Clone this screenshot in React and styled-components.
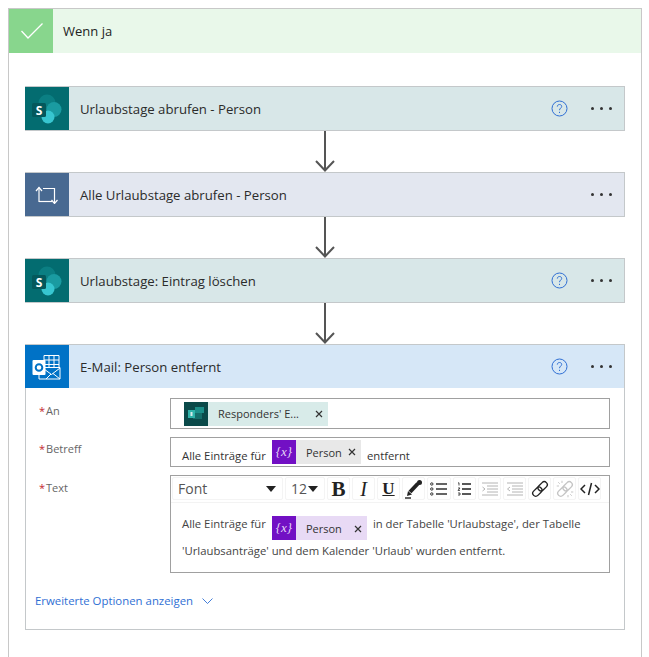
import React from 'react';
import styled, { createGlobalStyle } from 'styled-components';

const Global = createGlobalStyle`
  html, body {
    margin: 0;
    height: 657px;
    overflow: hidden;
    background: #fff;
    font-family: "Open Sans", "Noto Sans", "Liberation Sans", sans-serif;
    color: #2b2b2b;
  }
`;

const Page = styled.div`
  padding: 8px 0 0 8px;
`;

const Branch = styled.section`
  width: 632px;
  height: 660px;
  border: 1px solid #c8c8c8;
  border-bottom: 0;
  display: flex;
  flex-direction: column;
`;

const BranchHeader = styled.header`
  height: 44px;
  background: #e9f8ea;
  display: flex;
  align-items: center;
`;

const BranchIcon = styled.div`
  width: 44px;
  height: 44px;
  background: #88d68d;
  display: flex;
  align-items: center;
  justify-content: center;
`;

const BranchTitle = styled.span`
  margin-left: 10px;
  font-size: 13px;
  color: #222;
`;

const Flow = styled.div`
  padding: 33px 0 0 16px;
  display: flex;
  flex-direction: column;
  width: 600px;
`;

const Card = styled.div`
  width: 598px;
  border: 1px solid #c4c8ca;
  display: flex;
  flex-direction: column;
`;

const CardHeader = styled.div`
  height: 43px;
  background: ${p => p.$bg};
  display: flex;
  align-items: center;
`;

const CardIcon = styled.div`
  width: 44px;
  height: 43px;
  margin-left: -1px;
  background: ${p => p.$bg};
  display: flex;
  align-items: center;
  justify-content: center;
`;

const CardTitle = styled.span`
  flex: 1;
  margin-left: 11px;
  font-size: 13.2px;
  color: #2b2b2b;
`;

const HelpIcon = styled.svg`
  width: 17px;
  height: 17px;
  margin-right: 23px;
`;

const MoreDots = styled.div`
  width: 21px;
  margin-right: 12px;
  display: flex;
  justify-content: space-between;

  i {
    width: 3px;
    height: 3px;
    border-radius: 50%;
    background: #333;
  }
`;

const Connector = styled.svg`
  display: block;
  width: 600px;
  height: 41px;
`;

const Form = styled.div`
  padding: 10px 13px 0 13px;
  display: grid;
  grid-template-columns: 131px 440px;
  row-gap: 8px;
`;

const Label = styled.label`
  font-size: 11px;
  color: #666;
  padding-top: ${p => p.$top}px;

  em {
    color: #c4262e;
    font-style: normal;
    margin-right: 1px;
  }
`;

const Field = styled.div`
  box-sizing: border-box;
  height: ${p => p.$h}px;
  border: 1px solid #a0a0a0;
  display: flex;
  align-items: center;
  padding-left: ${p => p.$pad}px;
  font-size: 11.3px;
  color: #333;
`;

const RichField = styled.div`
  box-sizing: border-box;
  height: 98px;
  border: 1px solid #a0a0a0;
`;

const Toolbar = styled.div`
  height: 25px;
  padding: 1px 1px 0;
  display: flex;
  gap: 2px;
  border-bottom: 1px solid #f3f3f3;
`;

const ToolButton = styled.div`
  box-sizing: border-box;
  width: ${p => p.$w || 23}px;
  height: 23px;
  border: 1px solid #f4f4f4;
  border-radius: 2px;
  display: flex;
  align-items: center;
  justify-content: ${p => (p.$spread ? 'space-between' : 'center')};
  padding: ${p => (p.$spread ? '0 6px 0 5px' : '0')};
  font-size: 14px;
  color: #555;
`;

const Caret = styled.span`
  width: 0;
  height: 0;
  border-left: 5px solid transparent;
  border-right: 5px solid transparent;
  border-top: 6px solid #222;
`;

const Glyph = styled.span`
  font-family: "Liberation Serif", serif;
  font-weight: ${p => (p.$bold ? 700 : 400)};
  font-style: ${p => (p.$italic ? 'italic' : 'normal')};
  text-decoration: ${p => (p.$under ? 'underline' : 'none')};
  font-size: ${p => p.$size || 15}px;
  line-height: 20px;
  color: #222;
`;

const RichBody = styled.div`
  padding: 13px 12px 0 11px;
  font-size: 11.3px;
  color: #444;
`;

const RichLine = styled.div`
  height: ${p => p.$h}px;
  display: flex;
  align-items: flex-start;
  line-height: 16px;
  white-space: pre;
`;

const Token = styled.span`
  display: inline-flex;
  align-items: center;
  height: 24px;
  width: ${p => p.$w}px;
  margin: ${p => p.$margin || '0'};
  background: ${p => p.$bg};
  font-size: 11px;
  color: #333;
`;

const TokenIcon = styled.span`
  width: 24px;
  height: 24px;
  flex: none;
  background: ${p => p.$bg};
  color: #e5d6f7;
  font-family: "Liberation Serif", serif;
  font-size: 13px;
  font-style: italic;
  display: flex;
  align-items: center;
  justify-content: center;
`;

const TokenText = styled.span`
  flex: 1;
  padding-left: 10px;
  position: relative;
  top: ${p => p.$shift || 0}px;
`;

const TokenClose = styled.svg`
  width: 8px;
  height: 8px;
  margin-right: 5px;
  position: relative;
  top: ${p => p.$shift || 0}px;
`;

const FieldText = styled.span`
  position: relative;
  top: 3px;
`;

const MoreLink = styled.div`
  box-sizing: border-box;
  height: 56px;
  padding: 20px 0 0 9px;
  display: flex;
  align-items: flex-start;
  gap: 9px;
  font-size: 11.4px;
  line-height: 16px;
  color: #2f6fd4;
`;

const Check = () => (
  <svg width="24" height="18" viewBox="0 0 24 18">
    <path d="M2.5 9L9 16L23.5 1.5" fill="none" stroke="#fff" strokeWidth="1.3" />
  </svg>
);

const SharePoint = () => (
  <svg width="32" height="32" viewBox="0 0 32 32">
    <circle cx="16" cy="10" r="8.5" fill="#0b7f83" />
    <circle cx="23" cy="16.5" r="7.5" fill="#1a9ba1" />
    <circle cx="17" cy="24" r="6.5" fill="#37c6d0" />
    <rect x="1" y="10" width="14" height="14" rx="1.5" fill="#04585c" />
    <text x="8" y="21.5" textAnchor="middle" fontFamily="Open Sans" fontWeight="700" fontSize="12" fill="#fff">S</text>
  </svg>
);

const Loop = () => (
  <svg width="24" height="18" viewBox="0 0 24 18" fill="none" stroke="#fff" strokeWidth="1.2">
    <path d="M4 16V1.5" />
    <path d="M1 5L4 1.5L7 5" />
    <path d="M4 15.5H17" />
    <path d="M8 2.5H19.5V17" />
    <path d="M16.5 14L19.5 17.5L22.5 14" />
  </svg>
);

const Outlook = () => (
  <svg width="30" height="30" viewBox="0 0 30 30" fill="none">
    <path d="M12 3.5H27V17H12Z" stroke="#fff" strokeWidth="1" />
    <path d="M17 3.5V17M22 3.5V17M12 8H27M12 12.5H27" stroke="#fff" strokeWidth="1" />
    <path d="M7 15.5H28V27H7Z" fill="#0072c6" stroke="#fff" strokeWidth="1" />
    <path d="M12 17L19.5 22.5L28 16M14 27L19 22M28 27L21 21.5" stroke="#fff" strokeWidth="1" />
    <rect x=".5" y="8" width="13" height="15" rx="1" fill="#fff" />
    <circle cx="7" cy="15.5" r="3.3" stroke="#0072c6" strokeWidth="2" />
  </svg>
);

const FormsIcon = () => (
  <svg width="16" height="13" viewBox="0 0 16 13">
    <rect x="7" y="0" width="9" height="6" fill="#1c8f89" />
    <rect x="5" y="6" width="9" height="6" fill="#146e6a" />
    <rect x="0" y="3" width="7" height="8" fill="#2fb3aa" />
    <rect x="2.5" y="5" width="2" height="4" fill="#d8ebe9" />
  </svg>
);

const Help = () => (
  <HelpIcon viewBox="0 0 17 17" fill="none" stroke="#2f6fd4" strokeWidth="1">
    <circle cx="8.5" cy="8.5" r="7.5" />
    <path d="M6.3 6.6C6.3 5.3 7.3 4.5 8.5 4.5C9.8 4.5 10.7 5.3 10.7 6.4C10.7 8 8.5 8.2 8.5 10.2" />
    <path d="M8.5 11.8V13" />
  </HelpIcon>
);

const More = () => (
  <MoreDots>
    <i />
    <i />
    <i />
  </MoreDots>
);

const Arrow = () => (
  <Connector viewBox="0 0 600 41" fill="none" stroke="#555">
    <path d="M300 0V40" strokeWidth="2" />
    <path d="M291 30L300 39.5L309 30" strokeWidth="2" />
  </Connector>
);

const Close = ({ shift }) => (
  <TokenClose $shift={shift} viewBox="0 0 8 8" stroke="#333" strokeWidth="1.2">
    <path d="M1 1L7 7M7 1L1 7" />
  </TokenClose>
);

const Pen = () => (
  <svg width="20" height="20" viewBox="0 0 20 20" fill="none">
    <path d="M6 13L14 4.5" stroke="#222" strokeWidth="4" />
    <circle cx="15.5" cy="3.5" r="2.5" fill="#222" />
    <path d="M4 12L3 17L8 15.5Z" fill="#222" />
    <path d="M1 19H7" stroke="#222" strokeWidth="1.4" />
  </svg>
);

const BulletList = () => (
  <svg width="18" height="14" viewBox="0 0 18 14" fill="none" stroke="#333">
    <circle cx="1.8" cy="2" r="1.2" />
    <circle cx="1.8" cy="7" r="1.2" />
    <circle cx="1.8" cy="12" r="1.2" />
    <path d="M6 2H17M6 7H17M6 12H17" strokeWidth="1.4" />
  </svg>
);

const NumberList = () => (
  <svg width="15" height="14" viewBox="0 0 15 14" fill="none" stroke="#222">
    <path d="M1 1L2 .8V3.5M1 6H3L1 8.4H3M1 11H3V13H1" strokeWidth=".8" />
    <path d="M5 2H14M5 7H14M5 12H14" strokeWidth="1.4" />
  </svg>
);

const Indent = ({ flip }) => (
  <svg width="18" height="14" viewBox="0 0 18 14" fill="none" stroke="#b4b4b4" strokeWidth="1">
    <path d="M1 1H17M6 4H17M6 7H17M6 10H17M1 13H17" />
    <path d={flip ? 'M4 5L1.5 7L4 9' : 'M1.5 5L4 7L1.5 9'} />
  </svg>
);

const LinkIcon = () => (
  <svg width="18" height="18" viewBox="0 0 24 24" fill="none" stroke="#222" strokeWidth="1.8">
    <g transform="rotate(-45 12 12)">
      <rect x="0" y="8" width="14" height="8" rx="4" />
      <rect x="10" y="8" width="14" height="8" rx="4" />
    </g>
  </svg>
);

const UnlinkIcon = () => (
  <svg width="18" height="18" viewBox="0 0 24 24" fill="none" stroke="#c4c4c4" strokeWidth="1.8">
    <g transform="rotate(-45 12 12)">
      <rect x="0" y="8" width="14" height="8" rx="4" />
      <rect x="10" y="8" width="14" height="8" rx="4" />
    </g>
    <path d="M3 3l2 2M1 8h3M8 1v3M21 21l-2-2M23 16h-3M16 23v-3" strokeWidth="1.3" />
  </svg>
);

const CodeIcon = () => (
  <svg width="20" height="14" viewBox="0 0 20 14" fill="none" stroke="#222" strokeWidth="1.5">
    <path d="M5 3L1 7L5 11M15 3L19 7L15 11M11.5 1L8.5 13" />
  </svg>
);

const Chevron = () => (
  <svg width="11" height="7" viewBox="0 0 11 7" fill="none" stroke="#2f6fd4" strokeWidth=".9" style={{ marginTop: 5 }}>
    <path d="M.5 .5L5.5 5.5L10.5 .5" />
  </svg>
);

const PersonToken = ({ bg, w, margin, iconShift }) => (
  <Token $bg={bg} $w={w} $margin={margin}>
    <TokenIcon $bg="#7210c4">{'{x}'}</TokenIcon>
    <TokenText $shift={iconShift}>Person</TokenText>
    <Close shift={iconShift} />
  </Token>
);

const App = () => (
  <Page>
    <Global />
    <Branch>
      <BranchHeader>
        <BranchIcon>
          <Check />
        </BranchIcon>
        <BranchTitle>Wenn ja</BranchTitle>
      </BranchHeader>
      <Flow>
        <Card>
          <CardHeader $bg="#d8e7e8">
            <CardIcon $bg="#036c70">
              <SharePoint />
            </CardIcon>
            <CardTitle>Urlaubstage abrufen - Person</CardTitle>
            <Help />
            <More />
          </CardHeader>
        </Card>
        <Arrow />
        <Card>
          <CardHeader $bg="#e3e7f0">
            <CardIcon $bg="#486991">
              <Loop />
            </CardIcon>
            <CardTitle>Alle Urlaubstage abrufen - Person</CardTitle>
            <More />
          </CardHeader>
        </Card>
        <Arrow />
        <Card>
          <CardHeader $bg="#d8e7e8">
            <CardIcon $bg="#036c70">
              <SharePoint />
            </CardIcon>
            <CardTitle>Urlaubstage: Eintrag löschen</CardTitle>
            <Help />
            <More />
          </CardHeader>
        </Card>
        <Arrow />
        <Card>
          <CardHeader $bg="#d6e7f7">
            <CardIcon $bg="#0072c6">
              <Outlook />
            </CardIcon>
            <CardTitle>E-Mail: Person entfernt</CardTitle>
            <Help />
            <More />
          </CardHeader>
          <Form>
            <Label $top={5}><em>*</em>An</Label>
            <Field $h={31} $pad={13}>
              <Token $bg="#d8ebe9" $w={144}>
                <TokenIcon $bg="#0b4a4a"><FormsIcon /></TokenIcon>
                <TokenText>Responders' E...</TokenText>
                <Close />
              </Token>
            </Field>
            <Label $top={4}><em>*</em>Betreff</Label>
            <Field $h={30} $pad={11}>
              <FieldText>Alle Einträge für</FieldText>
              <PersonToken bg="#e8e8e8" w={89} margin="0 6px 0 6px" />
              <FieldText>entfernt</FieldText>
            </Field>
            <Label $top={5}><em>*</em>Text</Label>
            <RichField>
              <Toolbar>
                <ToolButton $w={111} $spread>
                  <span>Font</span>
                  <Caret />
                </ToolButton>
                <ToolButton $w={40} $spread>
                  <span>12</span>
                  <Caret />
                </ToolButton>
                <ToolButton><Glyph $bold $size={21}>B</Glyph></ToolButton>
                <ToolButton><Glyph $italic $size={20}>I</Glyph></ToolButton>
                <ToolButton><Glyph $under $bold $size={17}>U</Glyph></ToolButton>
                <ToolButton><Pen /></ToolButton>
                <ToolButton $w={24}><BulletList /></ToolButton>
                <ToolButton><NumberList /></ToolButton>
                <ToolButton><Indent /></ToolButton>
                <ToolButton><Indent flip /></ToolButton>
                <ToolButton><LinkIcon /></ToolButton>
                <ToolButton><UnlinkIcon /></ToolButton>
                <ToolButton><CodeIcon /></ToolButton>
              </Toolbar>
              <RichBody>
                <RichLine $h={27}>
                  Alle Einträge für
                  <PersonToken bg="#e8daf5" w={95} margin="0 6px 0 6px" iconShift={1} />
                  in der Tabelle 'Urlaubstage', der Tabelle
                </RichLine>
                <RichLine $h={16}>'Urlaubsanträge' und dem Kalender 'Urlaub' wurden entfernt.</RichLine>
              </RichBody>
            </RichField>
          </Form>
          <MoreLink>
            Erweiterte Optionen anzeigen
            <Chevron />
          </MoreLink>
        </Card>
      </Flow>
    </Branch>
  </Page>
);

export default App;
